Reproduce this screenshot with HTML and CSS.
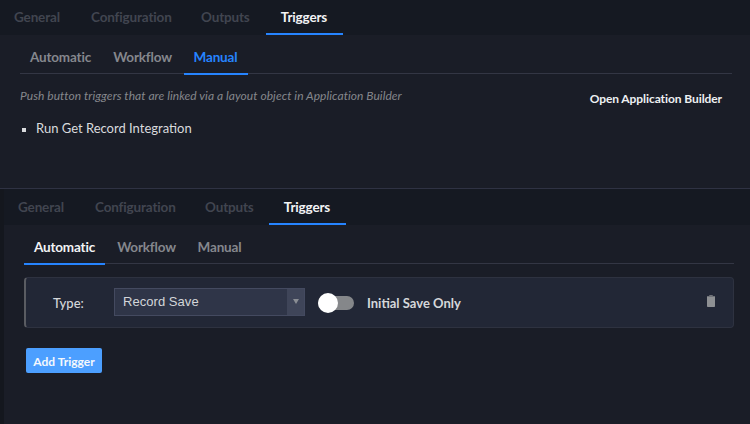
FILE: index.html
```html
<!DOCTYPE html>
<html lang="en">
<head>
<meta charset="utf-8">
<title>Triggers</title>
<link rel="stylesheet" href="styles.css">
</head>
<body>
<section class="panel panel-top">
  <nav class="tabs">
    <a class="tab tab-general">General</a>
    <a class="tab tab-config">Configuration</a>
    <a class="tab tab-outputs">Outputs</a>
    <a class="tab tab-triggers active">Triggers</a>
  </nav>
  <div class="content">
    <nav class="subtabs">
      <a class="subtab sub-auto">Automatic</a>
      <a class="subtab sub-flow">Workflow</a>
      <a class="subtab sub-manual current">Manual</a>
    </nav>
    <div class="intro">
      <em class="hint">Push button triggers that are linked via a layout object in Application Builder</em>
      <a class="open-link">Open Application Builder</a>
    </div>
    <ul class="list">
      <li>Run Get Record Integration</li>
    </ul>
  </div>
</section>
<section class="panel panel-bottom">
  <nav class="tabs">
    <a class="tab tab-general">General</a>
    <a class="tab tab-config">Configuration</a>
    <a class="tab tab-outputs">Outputs</a>
    <a class="tab tab-triggers active">Triggers</a>
  </nav>
  <div class="content">
    <nav class="subtabs">
      <a class="subtab sub-auto selected">Automatic</a>
      <a class="subtab sub-flow">Workflow</a>
      <a class="subtab sub-manual">Manual</a>
    </nav>
    <div class="card">
      <span class="type-label">Type:</span>
      <div class="select">
        <span class="select-value">Record Save</span>
        <span class="select-arrow"><svg width="6" height="5" viewBox="0 0 6 5"><path d="M0 0h6L3 5z" fill="#8a8d94"/></svg></span>
      </div>
      <span class="toggle"><span class="knob"></span></span>
      <span class="toggle-label">Initial Save Only</span>
      <svg class="trash" width="8" height="12" viewBox="0 0 8 12"><path d="M2.5 0h3l.5 1h2v1H0V1h2z" fill="#6f7278"/><path d="M0 2h8v9.2a.8.8 0 0 1-.8.8H.8a.8.8 0 0 1-.8-.8z" fill="#8e9093"/></svg>
    </div>
    <button class="add" type="button">Add Trigger</button>
  </div>
</section>
</body>
</html>
```
FILE: styles.css
```css
* { box-sizing: border-box; }
html, body { margin: 0; padding: 0; }
body {
  width: 750px;
  height: 424px;
  overflow: hidden;
  background: #1a1d27;
  font-family: "Lato", "Liberation Sans", sans-serif;
  color: #e6e7ea;
}
.panel { background: #1a1d27; }
.panel-top { height: 189px; border-bottom: 1px solid #2f3243; }
.panel-bottom { height: 235px; margin-left: 4px; position: relative; }
.panel-bottom::before {
  content: "";
  position: absolute;
  left: -4px;
  top: 0;
  bottom: 0;
  width: 4px;
  background: #14171e;
}

.tabs {
  display: flex;
  height: 35px;
  background: #151922;
}
.tab {
  height: 35px;
  padding-top: 8px;
  font-size: 13.5px;
  letter-spacing: -.15px;
  line-height: 18px;
  font-weight: 700;
  color: #414550;
  text-align: center;
  border-bottom: 2px solid transparent;
}
.tab-general { width: 76px; padding-left: 14px; text-align: left; }
.tab-config { width: 110px; text-align: left; padding-left: 15px; }
.tab-outputs { width: 80px; text-align: left; padding-left: 15px; }
.tab-triggers { width: 77px; padding-right: 1px; }
.tab.active { color: #f2f3f5; border-bottom-color: #2684ff; }
.panel-bottom .tabs { height: 36px; }
.panel-bottom .tab { height: 36px; padding-top: 9px; }
.panel-bottom .tab-outputs { width: 79px; }

.content { padding: 0 18px 0 20px; }
.subtabs {
  display: flex;
  height: 39px;
  border-bottom: 1px solid #333644;
}
.subtab {
  height: 40px;
  padding-top: 13px;
  font-size: 13.5px;
  letter-spacing: -.18px;
  line-height: 18px;
  font-weight: 700;
  color: #85878d;
  border-bottom: 2px solid transparent;
  text-align: center;
}
.sub-auto { width: 81px; }
.sub-flow { width: 83px; }
.sub-manual { width: 64px; padding-right: 1px; }
.subtab.current { color: #2684ff; border-bottom-color: #2684ff; }
.subtab.selected { color: #f2f3f5; border-bottom-color: #2684ff; }

.intro {
  display: flex;
  justify-content: space-between;
  height: 30px;
  padding-top: 13px;
}
.hint {
  font-size: 12px;
  letter-spacing: .05px;
  line-height: 18px;
  font-style: italic;
  color: #85878c;
}
.open-link {
  margin-top: 3px;
  margin-right: 10px;
  font-size: 12px;
  letter-spacing: -.08px;
  line-height: 18px;
  font-weight: 700;
  color: #eef0f2;
}
.list {
  margin: 15px 0 0;
  padding: 0 0 0 16px;
  list-style: square;
  font-size: 13px;
  line-height: 18px;
  color: #d9dadd;
}
.list li::marker { font-size: 11px; }

.panel-bottom .content { padding: 0 16px 0 20px; }
.card {
  display: flex;
  align-items: center;
  width: 710px;
  height: 51px;
  margin-top: 13px;
  background: #222736;
  border: 1px solid #2e3240;
  border-left: 2px solid #5a5c62;
  border-radius: 4px;
}
.type-label {
  width: 88px;
  padding-left: 27px;
  font-size: 13px;
  font-weight: 500;
  color: #d5d7da;
}
.select {
  display: flex;
  width: 191px;
  height: 28px;
  margin-top: -1px;
  background: #2f3548;
  border: 1px solid #444a60;
}
.select-value {
  flex: 1;
  padding: 4px 0 0 8px;
  font-family: "Liberation Sans", Arial, sans-serif;
  font-size: 13px;
  line-height: 18px;
  letter-spacing: .05px;
  color: #d3d5d9;
}
.select-arrow {
  width: 17px;
  display: flex;
  align-items: center;
  justify-content: center;
  background: #3f4559;
}
.select-arrow svg { margin-top: -2px; }
.toggle {
  position: relative;
  width: 36px;
  height: 14px;
  margin-left: 13px;
  border-radius: 7px;
  background: #85878a;
}
.knob {
  position: absolute;
  left: 0;
  top: -3px;
  width: 20px;
  height: 20px;
  border-radius: 50%;
  background: #fff;
}
.toggle-label {
  margin-left: 13px;
  font-size: 13px;
  font-weight: 700;
  color: #d5d7da;
}
.trash { margin-left: auto; margin-right: 18px; margin-top: -3px; }
.add {
  display: block;
  width: 76px;
  height: 25px;
  margin: 20px 0 0 2px;
  padding: 2px 0 0;
  border: 0;
  border-radius: 2px;
  background: #4c9fff;
  color: #f4f8fd;
  font-family: inherit;
  font-size: 12px;
  font-weight: 700;
}
```
